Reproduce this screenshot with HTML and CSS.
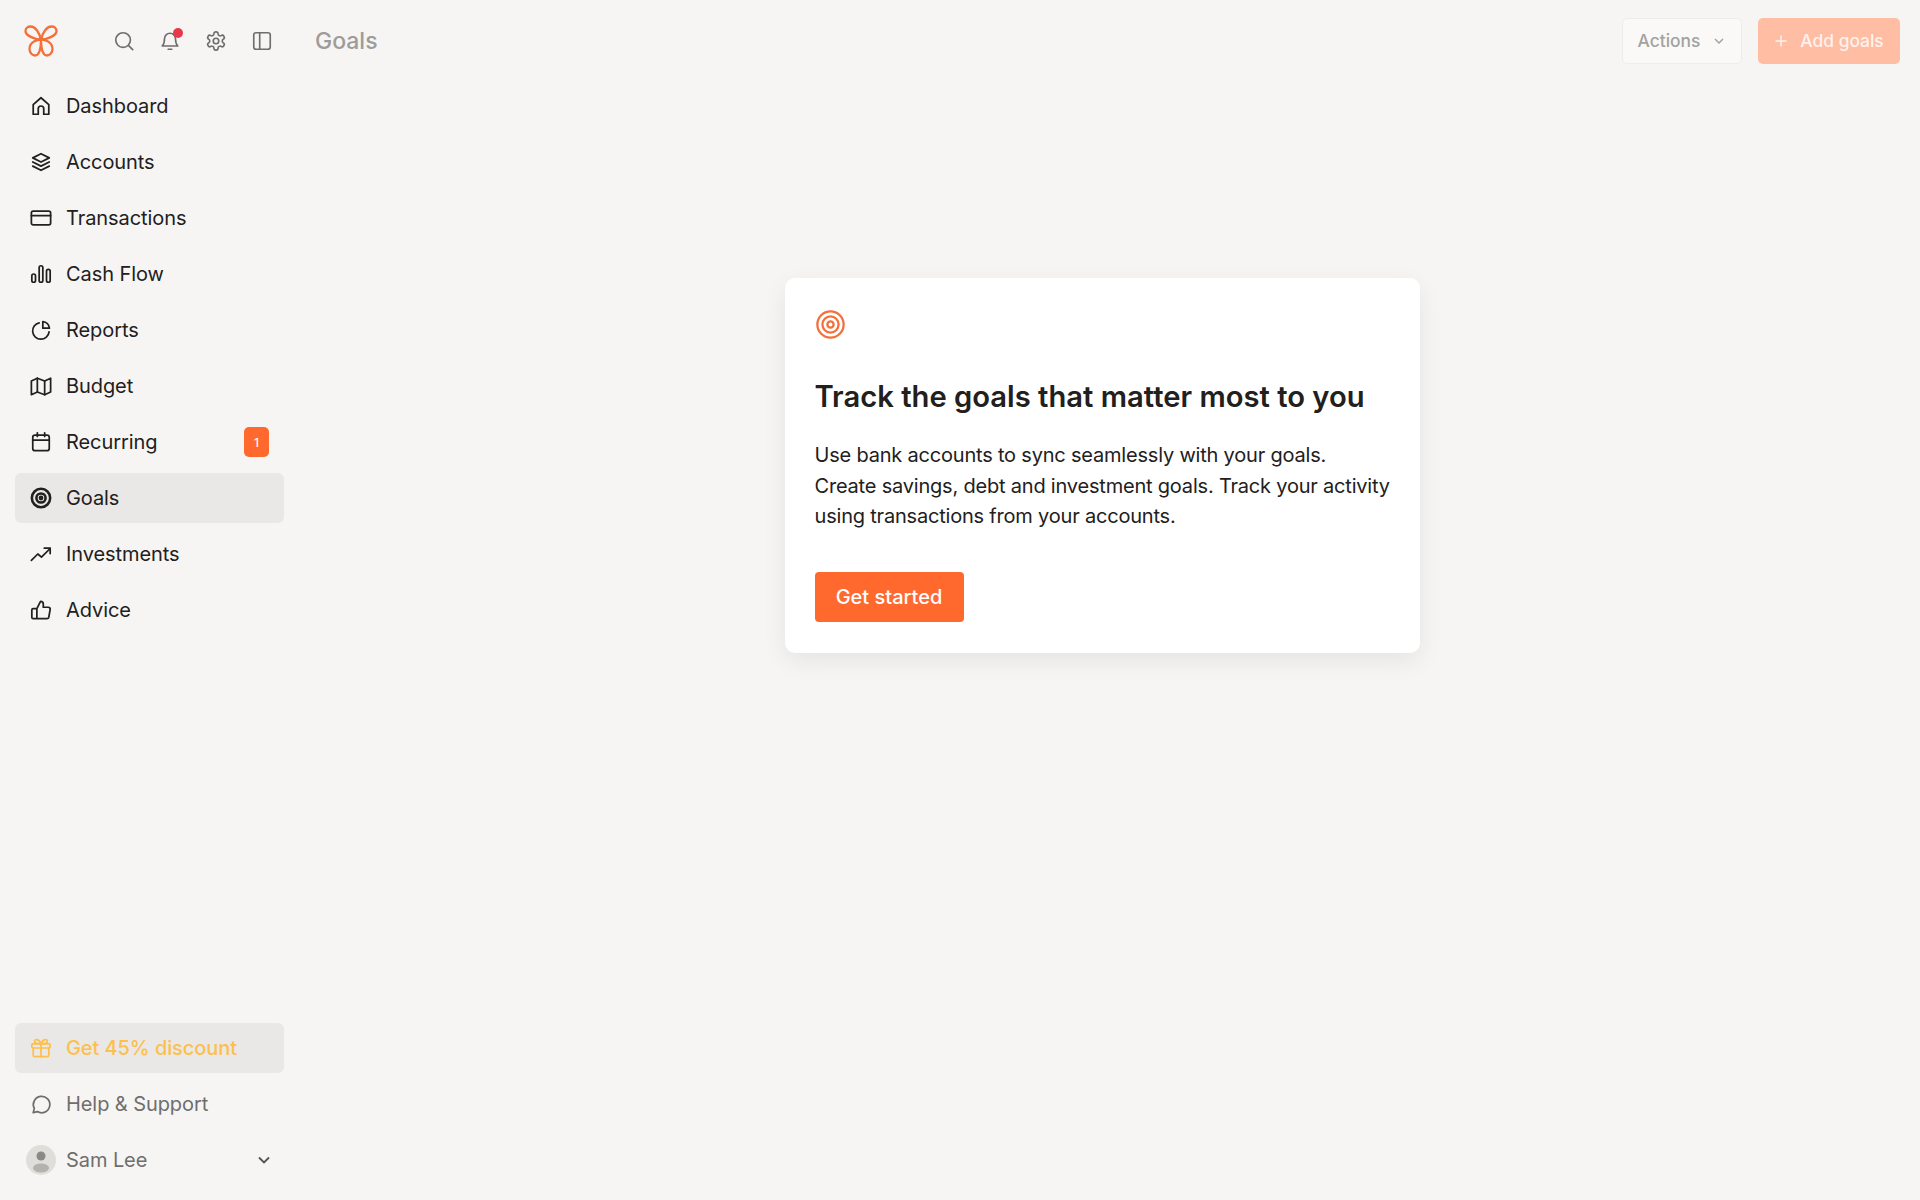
FILE: index.html
```html
<!DOCTYPE html>
<html>
<head>
  <title>Goals</title>
  <link rel="stylesheet" href="styles.css">
</head>
<body>
  <aside class="sidebar">
    <div class="toolbar">
      <svg class="logo" viewBox="0 0 34 32" fill="none" stroke="#f4703a" stroke-width="2.300" stroke-linecap="round" stroke-linejoin="round">
        <path d="M17 15C12 14 1.500 11 1.500 6C1.500 3 4 1.500 6.500 1.500C11 1.500 15.500 7 17 15C18.500 7 23 1.500 27.500 1.500C30 1.500 32.500 3 32.500 6C32.500 11 22 14 17 15"/>
        <path d="M22 14.500C13 13.500 5.500 17 5.500 24C5.500 28 8.500 30.500 11 30.500C14.500 30.500 16.500 27 17 17"/>
        <path d="M12 14.500C21 13.500 28.500 17 28.500 24C28.500 28 25.500 30.500 23 30.500C19.500 30.500 17.500 27 17 17"/>
      </svg>
      <div class="tools">
        <svg class="icon tool" viewBox="0 0 24 24"><circle cx="11" cy="11" r="8"/><path d="M17 17l4.500 4.500"/></svg>
        <span class="bell">
          <svg class="icon tool" viewBox="0 0 24 24"><path d="M6 9.500a6 6 0 0 1 12 0c0 5 1 6.500 2.500 8h-17C5 16 6 14.500 6 9.500z"/><path d="M10 21h4"/></svg>
          <span class="bell-dot"></span>
        </span>
        <svg class="icon tool" viewBox="0 0 24 24"><circle cx="12" cy="12" r="3"/><path d="M12.220 2h-.44a2 2 0 0 0-2 2v.18a2 2 0 0 1-1 1.730l-.43.25a2 2 0 0 1-2 0l-.15-.08a2 2 0 0 0-2.730.73l-.22.38a2 2 0 0 0 .73 2.730l.15.1a2 2 0 0 1 1 1.720v.51a2 2 0 0 1-1 1.740l-.15.09a2 2 0 0 0-.73 2.730l.22.38a2 2 0 0 0 2.730.73l.15-.08a2 2 0 0 1 2 0l.43.25a2 2 0 0 1 1 1.730V20a2 2 0 0 0 2 2h.44a2 2 0 0 0 2-2v-.18a2 2 0 0 1 1-1.730l.43-.25a2 2 0 0 1 2 0l.15.08a2 2 0 0 0 2.730-.73l.22-.39a2 2 0 0 0-.73-2.730l-.15-.08a2 2 0 0 1-1-1.740v-.5a2 2 0 0 1 1-1.740l.15-.09a2 2 0 0 0 .73-2.730l-.22-.38a2 2 0 0 0-2.730-.73l-.15.08a2 2 0 0 1-2 0l-.43-.25a2 2 0 0 1-1-1.730V4a2 2 0 0 0-2-2z"/></svg>
        <svg class="icon tool" viewBox="0 0 24 24"><rect x="3" y="3" width="18" height="18" rx="2.500"/><path d="M9.500 3v18"/></svg>
      </div>
    </div>

    <nav class="nav">
      <a class="nav-item">
        <svg class="icon" viewBox="0 0 24 24"><path d="M3.500 21V10.500L12 3l8.500 7.500V21h-5.500v-6a3 3 0 0 0-6 0v6z"/></svg>
        <span>Dashboard</span>
      </a>
      <a class="nav-item">
        <svg class="icon" viewBox="0 0 24 24"><path d="M12 3l9 4.500-9 4.500-9-4.500z"/><path d="M3 12l9 4.500 9-4.500"/><path d="M3 16.500L12 21l9-4.500"/></svg>
        <span>Accounts</span>
      </a>
      <a class="nav-item">
        <svg class="icon" viewBox="0 0 24 24"><rect x="1.500" y="4.500" width="21" height="15" rx="2"/><path d="M1.500 9.500h21"/></svg>
        <span>Transactions</span>
      </a>
      <a class="nav-item">
        <svg class="icon" viewBox="0 0 24 24"><rect x="2" y="12" width="4" height="9" rx="2"/><rect x="10" y="3" width="4" height="18" rx="2"/><rect x="18" y="7" width="4" height="14" rx="2"/></svg>
        <span>Cash Flow</span>
      </a>
      <a class="nav-item">
        <svg class="icon" viewBox="0 0 24 24"><path d="M10 4.200A9 9 0 1 0 20.800 14"/><path d="M14 2.800V10h7.200A8 8 0 0 0 14 2.800z"/></svg>
        <span>Reports</span>
      </a>
      <a class="nav-item">
        <svg class="icon" viewBox="0 0 24 24"><path d="M1.500 6.500L8 3.500l8 3 6.500-3v15l-6.500 3-8-3-6.500 3z"/><path d="M8 3.500v15"/><path d="M16 6.500v15"/></svg>
        <span>Budget</span>
      </a>
      <a class="nav-item">
        <svg class="icon" viewBox="0 0 24 24"><rect x="3" y="4.500" width="18" height="17" rx="2.500"/><path d="M3 10h18"/><path d="M8 2v4"/><path d="M16 2v4"/></svg>
        <span>Recurring</span>
        <span class="badge">1</span>
      </a>
      <a class="nav-item active">
        <svg class="icon icon-bold" viewBox="0 0 24 24"><circle cx="12" cy="12" r="10"/><circle cx="12" cy="12" r="5"/><circle cx="12" cy="12" r="1.200"/></svg>
        <span>Goals</span>
      </a>
      <a class="nav-item">
        <svg class="icon" viewBox="0 0 24 24"><path d="M1.500 19l7-7 4 3.500 9.500-9.500"/><path d="M15.500 5.500H22v6"/></svg>
        <span>Investments</span>
      </a>
      <a class="nav-item">
        <svg class="icon" viewBox="0 0 24 24"><path d="M7.500 10.500v11H3.500a1.500 1.500 0 0 1-1.500-1.500v-8a1.500 1.500 0 0 1 1.500-1.500zM7.500 10.500L11.500 2.500a3 3 0 0 1 3 3v3.500h5.500a2 2 0 0 1 2 2.400l-1.500 8.500a2 2 0 0 1-2 1.600H7.500"/></svg>
        <span>Advice</span>
      </a>
    </nav>

    <div class="sidebar-foot">
      <a class="nav-item promo">
        <svg class="icon" viewBox="0 0 24 24"><rect x="2" y="7.500" width="20" height="4.500" rx="1"/><path d="M3.500 12v8a1.500 1.500 0 0 0 1.500 1.500h14a1.500 1.500 0 0 0 1.500-1.500v-8"/><path d="M12 7.500v14"/><path d="M12 7.500C10 2 5 1.500 5 5c0 2 2 2.500 7 2.500zM12 7.500C14 2 19 1.500 19 5c0 2-2 2.500-7 2.500z"/></svg>
        <span>Get 45% discount</span>
      </a>
      <a class="nav-item muted">
        <svg class="icon" viewBox="0 0 24 24"><path d="M3.500 21.500l1.200-4.700A9 9 0 1 1 8 20.300z"/></svg>
        <span>Help &amp; Support</span>
      </a>
      <a class="nav-item muted user">
        <span class="avatar">
          <svg viewBox="0 0 30 30"><circle cx="15" cy="11" r="4.500" fill="#8a8986"/><ellipse cx="15" cy="23" rx="8" ry="4.500" fill="#b3b2af"/></svg>
        </span>
        <span>Sam Lee</span>
        <svg class="chevron" viewBox="0 0 14 14"><path d="M2 4.500l5 5 5-5"/></svg>
      </a>
    </div>
  </aside>

  <main class="main">
    <header class="topbar">
      <h1 class="page-title">Goals</h1>
      <div class="actions">
        <button class="btn-actions">Actions
          <svg viewBox="0 0 14 14"><path d="M3 5l4 4 4-4"/></svg>
        </button>
        <button class="btn-add">
          <svg viewBox="0 0 14 14"><path d="M7 1.500v11"/><path d="M1.500 7h11"/></svg>
          Add goals
        </button>
      </div>
    </header>

    <section class="card">
      <svg class="card-icon" viewBox="0 0 28 28"><circle cx="14" cy="14" r="12.700"/><circle cx="14" cy="14" r="7.800"/><circle cx="14" cy="14" r="3"/></svg>
      <h2>Track the goals that matter most to you</h2>
      <p>Use bank accounts to sync seamlessly with your goals.<br>Create savings, debt and investment goals. Track your activity using transactions from your accounts.</p>
      <button class="btn-start">Get started</button>
    </section>
  </main>
</body>
</html>
```

FILE: styles.css
```css
html, body {
  height: 100%;
  margin: 0;
  background: #f6f5f3;
}

body {
  display: flex;
  font-family: Inter, "Liberation Sans", sans-serif;
  font-size: 20px;
  color: #22201d;
  overflow: hidden;
}

.sidebar {
  width: 284px;
  padding: 0 0 15px 15px;
  box-sizing: border-box;
  display: flex;
  flex-direction: column;
  flex-shrink: 0;
}

.toolbar {
  height: 81px;
  display: flex;
  align-items: center;
  padding-left: 9px;
}

.logo {
  width: 34px;
  height: 32px;
}

.tools {
  display: flex;
  align-items: center;
  gap: 24px;
  margin-left: 55px;
}

.icon {
  width: 22px;
  height: 22px;
  fill: none;
  stroke: currentColor;
  stroke-width: 1.900;
  stroke-linejoin: round;
  stroke-linecap: round;
  flex-shrink: 0;
}

.tool {
  stroke: #6f6e6c;
  stroke-width: 1.800;
}

.bell {
  position: relative;
  display: flex;
}

.bell-dot {
  position: absolute;
  top: -2px;
  right: -2px;
  width: 10px;
  height: 10px;
  border-radius: 50%;
  background: #e8384a;
}

.icon-bold {
  stroke-width: 2.800;
}

.nav {
  display: flex;
  flex-direction: column;
  gap: 6px;
}

.nav-item {
  height: 50px;
  display: flex;
  align-items: center;
  gap: 14px;
  padding: 0 15px;
  border-radius: 6px;
  letter-spacing: -0.08px;
}

.nav-item.active {
  background: #e9e8e6;
}

.badge {
  margin-left: auto;
  width: 25px;
  height: 30px;
  border-radius: 5px;
  background: #ff692d;
  color: #fff;
  font-size: 12px;
  font-weight: 500;
  display: flex;
  align-items: center;
  justify-content: center;
}

.sidebar-foot {
  margin-top: auto;
  display: flex;
  flex-direction: column;
  gap: 6px;
}

.promo {
  background: #e9e8e6;
  color: #fdbf4d;
  font-weight: 500;
}

.muted {
  color: #6f6e6c;
}

.user {
  padding-left: 11px;
  gap: 10px;
}

.avatar {
  width: 30px;
  height: 30px;
  border-radius: 50%;
  background: #dfdedb;
  overflow: hidden;
  flex-shrink: 0;
}

.avatar svg {
  display: block;
  width: 30px;
  height: 30px;
}

.chevron {
  margin-left: auto;
  margin-right: -2px;
  width: 14px;
  height: 14px;
  fill: none;
  stroke: #55534f;
  stroke-width: 1.800;
}

.main {
  flex: 1;
  display: flex;
  flex-direction: column;
  min-width: 0;
}

.topbar {
  height: 81px;
  display: flex;
  align-items: center;
  justify-content: space-between;
  padding: 0 20px 0 31px;
}

.page-title {
  margin: 0;
  font-size: 23px;
  font-weight: 500;
  color: #9d9c9a;
}

.actions {
  display: flex;
  gap: 16px;
}

button {
  font-family: inherit;
  cursor: pointer;
}

.btn-actions {
  width: 120px;
  height: 46px;
  border: 1px solid #eeedeb;
  border-radius: 5px;
  background: #faf9f8;
  color: #a3a2a0;
  font-size: 17.400px;
  font-weight: 500;
  display: flex;
  align-items: center;
  justify-content: center;
  gap: 12px;
  padding: 0;
}

.btn-actions svg {
  width: 14px;
  height: 14px;
  fill: none;
  stroke: #a3a2a0;
  stroke-width: 1.500;
}

.btn-add {
  width: 142px;
  height: 46px;
  border: 0;
  border-radius: 5px;
  background: #ffbda3;
  color: #fff2ec;
  font-size: 17.400px;
  font-weight: 500;
  display: flex;
  align-items: center;
  justify-content: center;
  gap: 12px;
  padding: 0;
}

.btn-add svg {
  width: 14px;
  height: 14px;
  fill: none;
  stroke: #fff2ec;
  stroke-width: 1.500;
}

.card {
  width: 635px;
  margin: 197px auto 0;
  padding: 32px 20px 30px 30px;
  box-sizing: border-box;
  height: 375px;
  background: #fff;
  border-radius: 10px;
  box-shadow: 0 8px 24px rgba(0, 0, 0, 0.07);
}

.card-icon {
  display: block;
  width: 29px;
  height: 29px;
  margin-left: 1px;
  fill: none;
  stroke: #f4703a;
  stroke-width: 2.200;
}

.card h2 {
  margin: 40px 0 0;
  font-size: 29.200px;
  line-height: 36px;
  font-weight: 600;
}

.card p {
  margin: 25px 0 0;
  font-size: 20px;
  line-height: 30.600px;
  letter-spacing: -0.2px;
}

.btn-start {
  margin-top: 40px;
  width: 149px;
  height: 50px;
  border: 0;
  border-radius: 4px;
  background: #ff692d;
  color: #fff;
  font-size: 20px;
  font-weight: 500;
  padding: 0;
}
```
